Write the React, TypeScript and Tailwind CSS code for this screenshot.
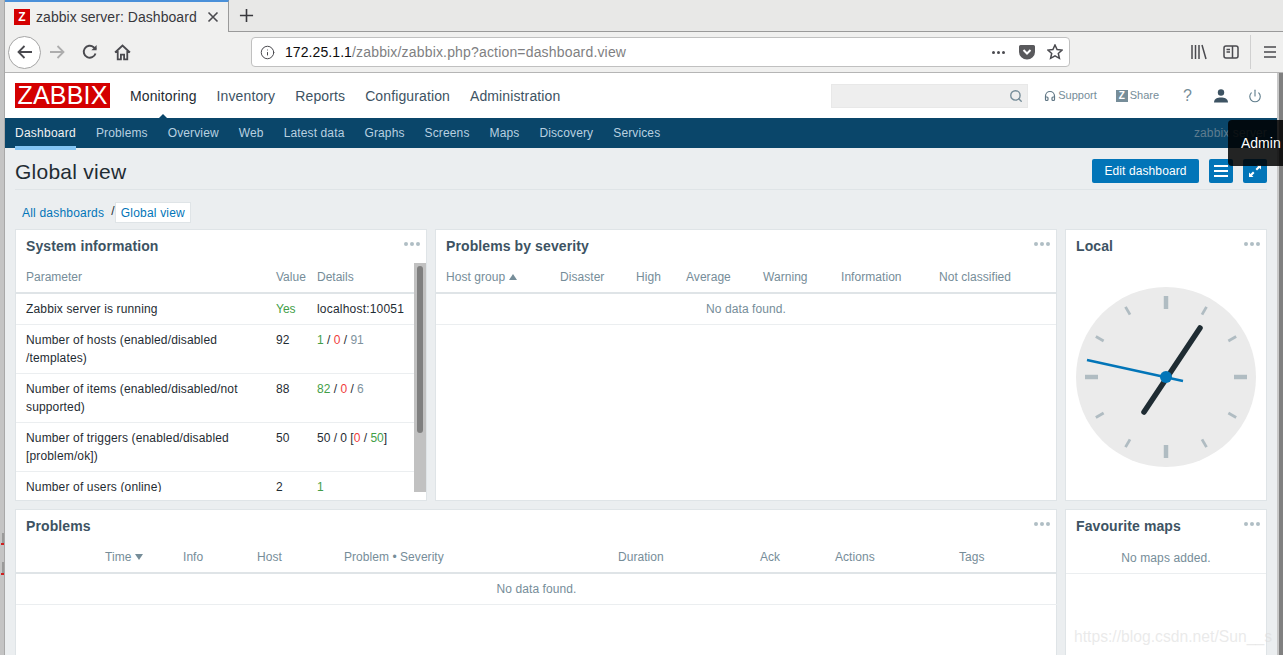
import { Headphones, Info, Power, Search } from 'lucide-react'

const sans = 'font-["Liberation_Sans",Arial,sans-serif]'

const mainNav = ['Monitoring', 'Inventory', 'Reports', 'Configuration', 'Administration']
const subNav = ['Dashboard', 'Problems', 'Overview', 'Web', 'Latest data', 'Graphs', 'Screens', 'Maps', 'Discovery', 'Services']

function Dots() {
  return (
    <div className="absolute right-[6px] top-[12px] flex gap-[2px]">
      <span className="h-[4px] w-[4px] rounded-full bg-[#b0bec5]" />
      <span className="h-[4px] w-[4px] rounded-full bg-[#b0bec5]" />
      <span className="h-[4px] w-[4px] rounded-full bg-[#b0bec5]" />
    </div>
  )
}

function Widget({ title, className, children }: { title: string; className?: string; children?: React.ReactNode }) {
  return (
    <section className={`relative border border-[#dfe4e7] bg-white ${className ?? ''}`}>
      <h4 className="pl-[10px] pt-[7px] text-[14px] font-bold leading-[18px] tracking-[0.1px] text-[#3d5363]">{title}</h4>
      <Dots />
      {children}
    </section>
  )
}

function Clock() {
  const ticks = [30, 60, 120, 150, 210, 240, 300, 330]
  const big = [0, 90, 180, 270]
  return (
    <svg viewBox="-90 -90 180 180" className="mx-auto mt-[32px] h-[180px] w-[180px]">
      <circle r="90" fill="#ebebeb" />
      {big.map((a) => (
        <line key={a} x1="0" y1="-68" x2="0" y2="-81" stroke="#b0bcc2" strokeWidth="4.5" transform={`rotate(${a})`} />
      ))}
      {ticks.map((a) => (
        <line key={a} x1="0" y1="-72" x2="0" y2="-81" stroke="#b0bcc2" strokeWidth="2.8" transform={`rotate(${a})`} />
      ))}
      <line x1="-22" y1="35" x2="34" y2="-49" stroke="#1f2c33" strokeWidth="5.5" strokeLinecap="round" />
      <line x1="-79" y1="-17" x2="17" y2="4" stroke="#0275b8" strokeWidth="2.5" />
      <circle r="6" fill="#0275b8" />
    </svg>
  )
}

function Th({ children }: { children?: React.ReactNode }) {
  return <th className="h-[30px] p-0 pb-[1px] text-left align-middle text-[12px] font-normal tracking-[0.05px] text-[#768d99]">{children}</th>
}

function SysRow({ param, value, details }: { param: React.ReactNode; value: React.ReactNode; details: React.ReactNode }) {
  return (
    <div className="grid grid-cols-[250px_41px_1fr] border-b border-[#ebeef0] py-[6px] pl-[10px] text-[12px] leading-[18px] text-[#1f2c33]">
      <div className="pr-[20px] tracking-[0.15px]">{param}</div>
      <div>{value}</div>
      <div className="whitespace-nowrap">{details}</div>
    </div>
  )
}

const Green = ({ children }: { children: React.ReactNode }) => <span className="text-[#429e47]">{children}</span>
const Red = ({ children }: { children: React.ReactNode }) => <span className="text-[#f03c3c]">{children}</span>
const Grey = ({ children }: { children: React.ReactNode }) => <span className="text-[#7e929e]">{children}</span>

function BrowserChrome() {
  return (
    <div className="text-[#3a3a3a]">
      {/* tab strip */}
      <div className="flex h-[32px] bg-[#e8e8e7]">
        <div className="flex w-[224px] items-center border-r border-[#9a9a9a] border-t-2 border-t-[#4a90d9] bg-[#f0f0ef] pl-[9px]">
          <span className="flex h-[16px] w-[16px] items-center justify-center bg-[#d40000] text-[12px] font-bold leading-none text-white">Z</span>
          <span className="ml-[6px] whitespace-nowrap text-[14px] tracking-[0.05px] text-[#38383d]">zabbix server: Dashboard</span>
          <svg viewBox="0 0 12 12" className="ml-[10px] h-[12px] w-[12px]" fill="none" stroke="#4a4a4f" strokeWidth="1.6">
            <path d="M1.500 1.500l9 9M10.500 1.500l-9 9" />
          </svg>
        </div>
        <div className="flex w-[34px] items-center justify-center border-b border-[#9a9a9a]">
          <svg viewBox="0 0 16 16" className="h-[15px] w-[15px]" fill="none" stroke="#38383d" strokeWidth="1.7">
            <path d="M8 1v14M1 8h14" />
          </svg>
        </div>
        <div className="flex-1 border-b border-[#9a9a9a]" />
      </div>
      {/* toolbar */}
      <div className="relative flex h-[41px] items-center border-b border-[#b5b5b5] bg-[#f0f0ef]">
        <div className="ml-[3px] flex h-[33px] w-[33px] items-center justify-center rounded-full border border-[#a5a5a5] bg-white">
          <svg viewBox="0 0 18 18" className="h-[18px] w-[18px]" fill="none" stroke="#4a4a4f" strokeWidth="1.8">
            <path d="M16 9H2.500M8.500 3L2.500 9l6 6" />
          </svg>
        </div>
        <svg viewBox="0 0 18 18" className="ml-[7px] h-[18px] w-[18px]" fill="none" stroke="#adadad" strokeWidth="1.8">
          <path d="M2 9h13.500M9.500 3l6 6-6 6" />
        </svg>
        <svg viewBox="0 0 16 16" className="ml-[16px] h-[16px] w-[16px]" fill="none" stroke="#4a4a4f" strokeWidth="1.9">
          <path d="M13.500 9.500A6 6 0 1 1 11.700 3.200L14 5" />
          <path d="M14.600 1v5.200H9.400" fill="#4a4a4f" stroke="none" />
        </svg>
        <svg viewBox="0 0 16 16" className="ml-[16px] h-[17px] w-[17px]" fill="none" stroke="#4a4a4f" strokeWidth="1.7">
          <path d="M1 8l7-6.500L15 8M3.500 6.500V14.500H6.500V10h3v4.500h3V6.500" />
        </svg>
        <div className="ml-[120px] flex h-[30px] w-[819px] items-center rounded-[4px] border border-[#c0c0c0] bg-white pl-[8px] pr-[6px]">
          <Info size={15} strokeWidth={1.6} color="#4a4a4f" />
          <span className="ml-[10px] whitespace-nowrap text-[14px] tracking-[0.08px] text-[#0c0c0d]">
            172.25.1.1<span className="tracking-[0.17px] text-[#7f7f82]">/zabbix/zabbix.php?action=dashboard.view</span>
          </span>
          <div className="flex-1" />
          <span className="mr-[14px] flex gap-[2px]">
            <span className="h-[3px] w-[3px] rounded-full bg-[#4a4a4f]" />
            <span className="h-[3px] w-[3px] rounded-full bg-[#4a4a4f]" />
            <span className="h-[3px] w-[3px] rounded-full bg-[#4a4a4f]" />
          </span>
          <svg viewBox="0 0 16 16" className="mr-[12px] h-[16px] w-[16px]">
            <path d="M1.500 1h13A1.500 1.500 0 0 1 16 2.500V8A8 7.500 0 0 1 0 8V2.500A1.500 1.500 0 0 1 1.500 1z" fill="#59595c" />
            <path d="M4.500 6L8 9.500 11.500 6" fill="none" stroke="#fff" strokeWidth="2" />
          </svg>
          <svg viewBox="0 0 16 16" className="h-[16px] w-[16px]" fill="none" stroke="#4a4a4f" strokeWidth="1.5">
            <path d="M8 1l2.100 4.600 5 .5-3.800 3.300 1.100 4.900L8 11.800l-4.400 2.500 1.100-4.900L.9 6.100l5-.5z" />
          </svg>
        </div>
        <div className="flex-1" />
        <svg viewBox="0 0 16 16" className="mr-[16px] h-[16px] w-[16px]" fill="none" stroke="#4a4a4f" strokeWidth="1.5">
          <path d="M1 1v14M4.500 1v14M8 1v14M11 1l4 14" />
        </svg>
        <svg viewBox="0 0 16 16" className="mr-[11px] h-[16px] w-[16px]" fill="none" stroke="#4a4a4f" strokeWidth="1.5">
          <rect x="1" y="2" width="14" height="12" rx="2" />
          <path d="M9.500 2v12M3.500 5.500h3.500M3.500 8h3.500" />
        </svg>
        <div className="mr-[13px] h-[34px] w-px bg-[#d0d0d0]" />
        <svg viewBox="0 0 12 12" className="mr-[7px] h-[12px] w-[12px]" stroke="#4a4a4f" strokeWidth="1.7">
          <path d="M0 1h12M0 6h12M0 11h12" />
        </svg>
      </div>
    </div>
  )
}

function ZabbixHeader() {
  return (
    <header>
      <div className="flex h-[45px] items-center bg-white pl-[10px]">
        <div className="flex h-[25px] w-[95px] items-center justify-center bg-[#d40000] text-[25px] leading-none tracking-[0.2px] text-white">ZABBIX</div>
        <nav className="ml-[10px] flex pt-[2px] text-[14px] tracking-[0.12px]">
          {mainNav.map((item, i) => (
            <a key={item} className={`relative px-[10px] ${i === 0 ? 'text-[#1f2c33]' : 'text-[#3d5363]'}`}>
              {item}
              {i === 0 && (
                <span className="absolute bottom-[-15px] left-1/2 ml-[-8px] h-0 w-0 border-x-[8px] border-b-[8px] border-x-transparent border-b-[#0a466a]" />
              )}
            </a>
          ))}
        </nav>
        <div className="flex-1" />
        <div className="flex h-[24px] w-[197px] items-center justify-end border border-[#e8e8e8] bg-[#eeeeee] pr-[4px]">
          <Search size={14} strokeWidth={2.4} color="#768d99" />
        </div>
        <a className="ml-[15px] flex items-center text-[11px] text-[#768d99]">
          <Headphones size={12} strokeWidth={2.4} color="#5f7684" className="ml-[1px] mr-[2px]" />
          Support
        </a>
        <a className="ml-[19px] flex items-center text-[11px] text-[#768d99]">
          <span className="mr-[2px] flex h-[12px] w-[12px] items-center justify-center bg-[#768d99] text-[10px] font-bold leading-none text-white">Z</span>
          Share
        </a>
        <span className="ml-[24px] text-[16px] leading-none text-[#768d99]">?</span>
        <svg viewBox="0 0 14 14" className="ml-[22px] h-[14px] w-[14px]" fill="#3d5363">
          <circle cx="7" cy="3.500" r="3.200" />
          <path d="M0 13.500C0 9.800 3.500 8.600 7 8.600s7 1.200 7 4.900z" />
        </svg>
        <Power size={14} strokeWidth={1.9} color="#5f7d8c" className="ml-[20px] mr-[15px]" />
      </div>
      <div className="flex h-[30px] items-stretch bg-[#0a466a] text-[12px] tracking-[0.13px]">
        {subNav.map((item, i) => (
          <a key={item} className={`flex items-center px-[10px] ${i === 0 ? 'text-[#f2f2f2]' : 'text-[#b8d0e0]'}`}>
            <span className={i === 0 ? 'relative tracking-[0.25px]' : ''}>
              {item}
              {i === 0 && <span className="absolute bottom-[-8px] left-0 h-[4px] w-full bg-[#84c5f4]" />}
            </span>
          </a>
        ))}
        <div className="flex-1" />
        <span className="flex items-center pr-[10px] text-[#5e7d90]">zabbix server</span>
      </div>
    </header>
  )
}

export default function App() {
  return (
    <div className={`relative flex h-[655px] w-[1283px] overflow-hidden bg-[#c4c4c4] ${sans}`}>
      <div className="relative w-[5px] shrink-0 border-r border-[#a8a8a8] bg-[#c4c4c4]">
        <span className="absolute left-[2px] top-[533px] h-[10px] w-[2px] bg-[#9a9a9a]" />
        <span className="absolute left-[1px] top-[543px] h-[2px] w-[3px] bg-[#d02020]" />
        <span className="absolute left-[2px] top-[562px] h-[11px] w-[2px] bg-[#9a9a9a]" />
        <span className="absolute left-[1px] top-[573px] h-[2px] w-[3px] bg-[#d02020]" />
      </div>
      <div className="flex min-w-0 flex-1 flex-col">
        <BrowserChrome />
        <div className="flex min-h-0 flex-1">
          <div className="min-w-0 flex-1">
            <ZabbixHeader />
            <main className="h-full bg-[#ebeef0] px-[10px]">
              <div className="flex h-[42px] items-center border-b border-[#dfe4e7] pt-[4px]">
                <h1 className="mt-[2px] text-[21px] font-normal leading-none tracking-[0.25px] text-[#1f2c33]">Global view</h1>
                <div className="flex-1" />
                <button className="h-[24px] w-[107px] rounded-[2px] bg-[#0275b8] text-[12px] tracking-[0.1px] text-white">Edit dashboard</button>
                <button className="ml-[10px] flex h-[24px] w-[24px] items-center justify-center rounded-[2px] bg-[#0275b8]">
                  <svg viewBox="0 0 14 12" className="h-[12px] w-[14px]" stroke="#fff" strokeWidth="2">
                    <path d="M0 1h14M0 6h14M0 11h14" />
                  </svg>
                </button>
                <button className="ml-[10px] flex h-[24px] w-[24px] items-center justify-center rounded-[2px] bg-[#0275b8]">
                  <svg viewBox="0 0 14 14" className="h-[14px] w-[14px]" fill="#fff">
                    <path d="M8.500 1H13v4.500L11.500 4 9 6.500 7.500 5 10 2.500zM5.500 13H1V8.500L2.500 10 5 7.500 6.500 9 4 11.500z" />
                  </svg>
                </button>
              </div>
              <div className="flex h-[39px] items-center pl-[7px] pt-[6px] text-[12px] tracking-[0.2px] text-[#0275b8]">
                All dashboards
                <span className="ml-[7px] mt-[-3px] text-[#1f2c33]">/</span>
                <span className="flex h-[21px] items-center border border-[#dfe4e7] bg-white px-[5px]">Global view</span>
              </div>
              <div className="grid grid-cols-[412px_622px_202px] grid-rows-[272px_200px] gap-[8px]">
                <Widget title="System information" className="overflow-hidden">
                  <div className="relative mt-[8px] h-[229px] overflow-hidden pr-[12px]">
                    <div className="absolute bottom-0 right-0 top-0 w-[12px] bg-[#c1c1c1]">
                      <div className="ml-[3px] mt-[3px] h-[167px] w-[6px] rounded-[3px] bg-[#7f7f7f]" />
                    </div>
                    <div className="grid h-[31px] grid-cols-[250px_41px_1fr] items-center border-b-2 border-[#dfe4e7] pb-[1px] pl-[10px] text-[12px] text-[#768d99]">
                      <span>Parameter</span>
                      <span>Value</span>
                      <span>Details</span>
                    </div>
                    <SysRow param="Zabbix server is running" value={<Green>Yes</Green>} details={<span className="tracking-[0.2px]">localhost:10051</span>} />
                    <SysRow param="Number of hosts (enabled/disabled /templates)" value="92" details={<><Green>1</Green> / <Red>0</Red> / <Grey>91</Grey></>} />
                    <SysRow param="Number of items (enabled/disabled/not supported)" value="88" details={<><Green>82</Green> / <Red>0</Red> / <Grey>6</Grey></>} />
                    <SysRow param="Number of triggers (enabled/disabled [problem/ok])" value="50" details={<>50 / 0 [<Red>0</Red> / <Green>50</Green>]</>} />
                    <SysRow param="Number of users (online)" value="2" details={<Green>1</Green>} />
                  </div>
                </Widget>
                <Widget title="Problems by severity">
                  <table className="mt-[8px] w-full table-fixed border-collapse">
                    <colgroup>
                      <col className="w-[124px]" />
                      <col className="w-[76px]" />
                      <col className="w-[50px]" />
                      <col className="w-[77px]" />
                      <col className="w-[78px]" />
                      <col className="w-[98px]" />
                      <col />
                    </colgroup>
                    <thead>
                      <tr className="border-b-2 border-[#dfe4e7]">
                        <Th>
                          <span className="flex items-center pl-[10px]">
                            Host group
                            <span className="ml-[4px] h-0 w-0 border-x-[4px] border-b-[6px] border-x-transparent border-b-[#768d99]" />
                          </span>
                        </Th>
                        <Th>Disaster</Th>
                        <Th>High</Th>
                        <Th>Average</Th>
                        <Th>Warning</Th>
                        <Th>Information</Th>
                        <Th>Not classified</Th>
                      </tr>
                    </thead>
                    <tbody>
                      <tr className="border-b border-[#ebeef0]">
                        <td colSpan={7} className="h-[31px] p-0 text-center text-[12px] tracking-[0.1px] text-[#768d99]">No data found.</td>
                      </tr>
                    </tbody>
                  </table>
                </Widget>
                <Widget title="Local">
                  <Clock />
                </Widget>
                <Widget title="Problems" className="col-span-2">
                  <table className="mt-[8px] w-[1041px] table-fixed border-collapse">
                    <colgroup>
                      <col className="w-[89px]" />
                      <col className="w-[78px]" />
                      <col className="w-[74px]" />
                      <col className="w-[87px]" />
                      <col className="w-[274px]" />
                      <col className="w-[142px]" />
                      <col className="w-[75px]" />
                      <col className="w-[124px]" />
                      <col />
                    </colgroup>
                    <thead>
                      <tr className="border-b-2 border-[#dfe4e7]">
                        <Th />
                        <Th>
                          <span className="flex items-center">
                            Time
                            <span className="ml-[4px] h-0 w-0 border-x-[4px] border-t-[6px] border-x-transparent border-t-[#768d99]" />
                          </span>
                        </Th>
                        <Th>Info</Th>
                        <Th>Host</Th>
                        <Th>Problem • Severity</Th>
                        <Th>Duration</Th>
                        <Th>Ack</Th>
                        <Th>Actions</Th>
                        <Th>Tags</Th>
                      </tr>
                    </thead>
                    <tbody>
                      <tr className="border-b border-[#ebeef0]">
                        <td colSpan={9} className="h-[31px] p-0 text-center text-[12px] tracking-[0.1px] text-[#768d99]">No data found.</td>
                      </tr>
                    </tbody>
                  </table>
                </Widget>
                <Widget title="Favourite maps">
                  <div className="mt-[8px] flex h-[31px] items-center justify-center border-b border-[#ebeef0] text-[12px] tracking-[0.1px] text-[#768d99]">No maps added.</div>
                </Widget>
              </div>
            </main>
          </div>
          <div className="flex w-[6px] shrink-0">
            <div className="w-[2px] bg-[#c8c8c8]" />
            <div className="flex-1 bg-[#808080]" />
          </div>
        </div>
      </div>
      {/* user tooltip hanging over the header */}
      <div className="absolute left-[1228px] top-[120px] flex h-[46px] w-[55px] items-center rounded-l-[4px] bg-[#000000d9] pl-[13px] text-[14px] text-white">Admin</div>
      <div className="absolute bottom-[6px] left-[1074px] whitespace-nowrap text-[15.7px] text-[#dcdcdc99]">https://blog.csdn.net/Sun__s</div>
    </div>
  )
}
